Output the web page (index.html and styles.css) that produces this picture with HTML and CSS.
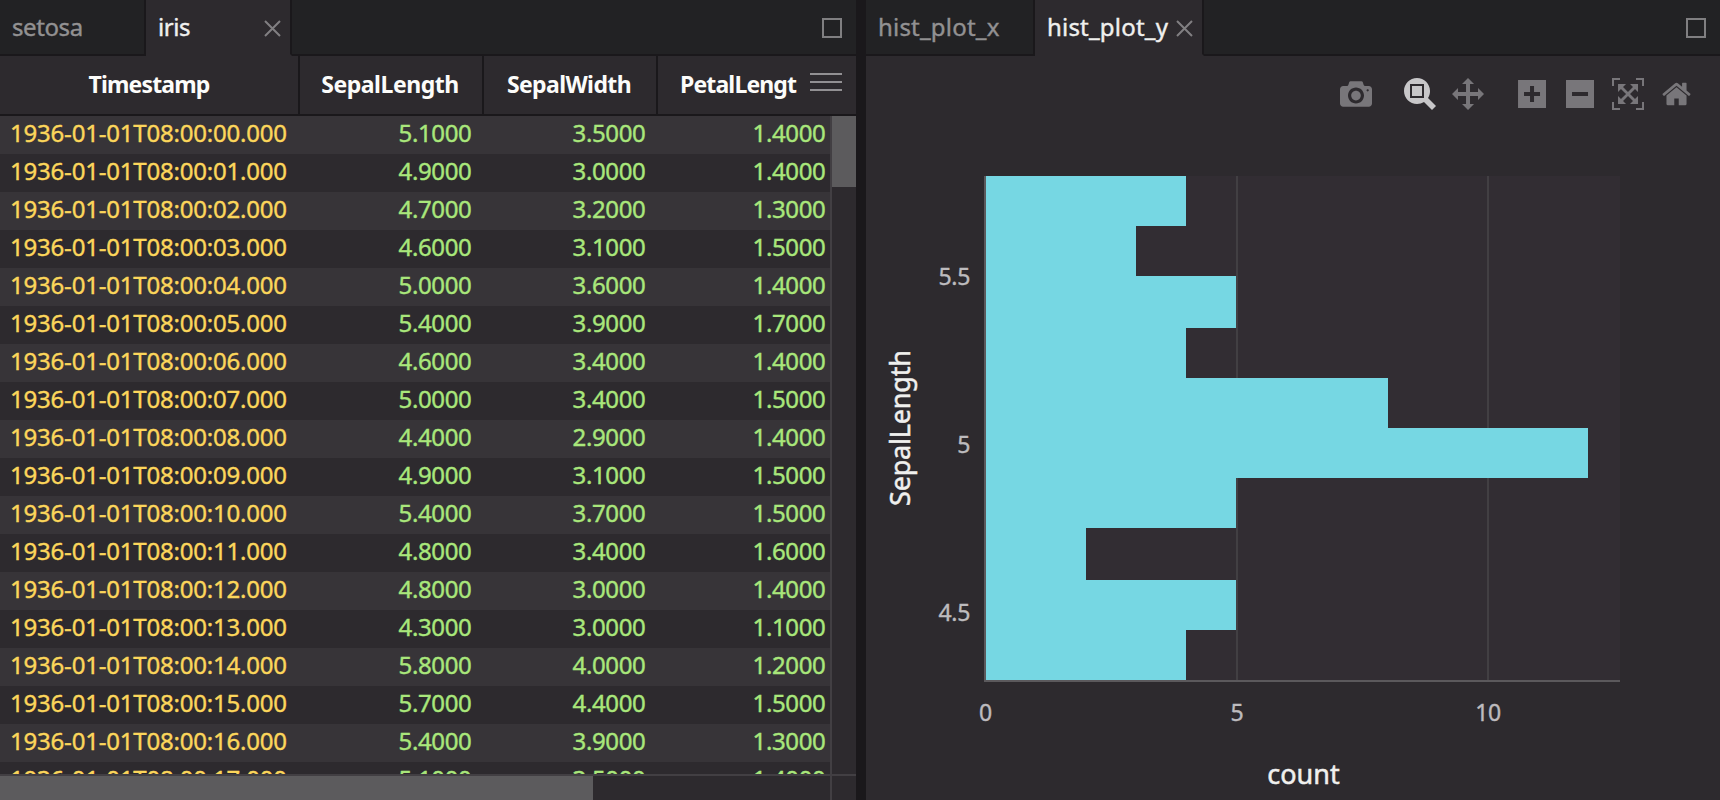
FILE: index.html
```html
<!DOCTYPE html>
<html lang="en">
<head>
<meta charset="utf-8">
<title>iris</title>
<link rel="stylesheet" href="styles.css">
</head>
<body>
<div class="workspace">
  <section class="panel panel-table">
    <nav class="tabs">
      <div class="tab tab-left t-setosa">setosa</div>
      <div class="tab tab-left active t-iris">iris
        <svg class="close" viewBox="0 0 17 17"><path d="M1 1L16 16M16 1L1 16"/></svg>
      </div>
      <div class="tab-fill"><span class="maximize"></span></div>
    </nav>
    <div class="grid-head">
      <div class="th">Timestamp</div>
      <div class="th th-length">SepalLength</div>
      <div class="th th-width">SepalWidth</div>
      <div class="th th-last"><span>PetalLengt</span><i class="menu"></i></div>
    </div>
    <div class="grid-main">
      <div class="rows">
        <div class="row"><span>1936-01-01T08:00:00.000</span><b>5.1000</b><b>3.5000</b><b>1.4000</b></div>
        <div class="row"><span>1936-01-01T08:00:01.000</span><b>4.9000</b><b>3.0000</b><b>1.4000</b></div>
        <div class="row"><span>1936-01-01T08:00:02.000</span><b>4.7000</b><b>3.2000</b><b>1.3000</b></div>
        <div class="row"><span>1936-01-01T08:00:03.000</span><b>4.6000</b><b>3.1000</b><b>1.5000</b></div>
        <div class="row"><span>1936-01-01T08:00:04.000</span><b>5.0000</b><b>3.6000</b><b>1.4000</b></div>
        <div class="row"><span>1936-01-01T08:00:05.000</span><b>5.4000</b><b>3.9000</b><b>1.7000</b></div>
        <div class="row"><span>1936-01-01T08:00:06.000</span><b>4.6000</b><b>3.4000</b><b>1.4000</b></div>
        <div class="row"><span>1936-01-01T08:00:07.000</span><b>5.0000</b><b>3.4000</b><b>1.5000</b></div>
        <div class="row"><span>1936-01-01T08:00:08.000</span><b>4.4000</b><b>2.9000</b><b>1.4000</b></div>
        <div class="row"><span>1936-01-01T08:00:09.000</span><b>4.9000</b><b>3.1000</b><b>1.5000</b></div>
        <div class="row"><span>1936-01-01T08:00:10.000</span><b>5.4000</b><b>3.7000</b><b>1.5000</b></div>
        <div class="row"><span>1936-01-01T08:00:11.000</span><b>4.8000</b><b>3.4000</b><b>1.6000</b></div>
        <div class="row"><span>1936-01-01T08:00:12.000</span><b>4.8000</b><b>3.0000</b><b>1.4000</b></div>
        <div class="row"><span>1936-01-01T08:00:13.000</span><b>4.3000</b><b>3.0000</b><b>1.1000</b></div>
        <div class="row"><span>1936-01-01T08:00:14.000</span><b>5.8000</b><b>4.0000</b><b>1.2000</b></div>
        <div class="row"><span>1936-01-01T08:00:15.000</span><b>5.7000</b><b>4.4000</b><b>1.5000</b></div>
        <div class="row"><span>1936-01-01T08:00:16.000</span><b>5.4000</b><b>3.9000</b><b>1.3000</b></div>
        <div class="row"><span>1936-01-01T08:00:17.000</span><b>5.1000</b><b>3.5000</b><b>1.4000</b></div>
      </div>
      <div class="vscroll"><div class="vthumb"></div></div>
      <div class="hscroll"><div class="hthumb"></div></div>
      <div class="corner"></div>
    </div>
  </section>

  <section class="panel panel-plot">
    <nav class="tabs">
      <div class="tab tab-right">hist_plot_x</div>
      <div class="tab tab-right active">hist_plot_y
        <svg class="close" viewBox="0 0 17 17"><path d="M1 1L16 16M16 1L1 16"/></svg>
      </div>
      <div class="tab-fill"><span class="maximize"></span></div>
    </nav>
    <div class="plot">
      <svg class="chart" viewBox="866 56 854 744">
        <rect class="plot-bg" x="984" y="176" width="636" height="504"/>
        <path class="gridline" d="M1237 176V680M1488 176V680"/>
        <path class="bars" d="M986 176H1186V226H1136V276H1236V328H1186V378H1388V428H1588V478H1236V528H1086V580H1236V630H1186V680H986Z"/>
        <path class="axis" d="M985 176V681H1620"/>
        <g class="tick" text-anchor="end">
          <text x="970" y="285">5.5</text>
          <text x="970" y="453">5</text>
          <text x="970" y="621">4.5</text>
        </g>
        <g class="tick" text-anchor="middle">
          <text x="985.5" y="721">0</text>
          <text x="1237" y="721">5</text>
          <text x="1488" y="721">10</text>
        </g>
        <text class="axis-title" text-anchor="middle" x="1303.5" y="784">count</text>
        <text class="axis-title" text-anchor="middle" transform="translate(909.5 428) rotate(-90)" textLength="156">SepalLength</text>
      </svg>
      <div class="modebar">
        <div class="group">
          <svg viewBox="0 0 1000 1000"><path transform="matrix(1 0 0 -1 0 850)" d="m500 450c-83 0-150-67-150-150 0-83 67-150 150-150 83 0 150 67 150 150 0 83-67 150-150 150z m400 150h-120c-16 0-34 13-39 29l-31 93c-6 15-23 28-40 28h-340c-16 0-34-13-39-28l-31-94c-6-15-23-28-40-28h-120c-55 0-100-45-100-100v-450c0-55 45-100 100-100h800c55 0 100 45 100 100v450c0 55-45 100-100 100z m-400-550c-138 0-250 112-250 250 0 138 112 250 250 250 138 0 250-112 250-250 0-138-112-250-250-250z m365 380c-19 0-35 16-35 35 0 19 16 35 35 35 19 0 35-16 35-35 0-19-16-35-35-35z"/></svg>
        </div>
        <div class="group">
          <svg class="on" viewBox="0 0 1000 1000"><path transform="matrix(1 0 0 -1 0 850)" d="m1000-25l-250 251c40 63 63 138 63 218 0 224-182 406-407 406-224 0-406-182-406-406s183-406 407-406c80 0 155 22 218 62l250-250 125 125z m-812 250l0 438 437 0 0-438-437 0z m62 375l313 0 0-312-313 0 0 312z"/></svg>
          <svg viewBox="0 0 1000 1000"><path transform="matrix(1 0 0 -1 0 850)" d="m1000 350l-187 188 0-125-250 0 0 250 125 0-188 187-187-187 125 0 0-250-250 0 0 125-188-188 186-187 0 125 252 0 0-250-125 0 187-188 188 188-125 0 0 250 250 0 0-126 187 188z"/></svg>
        </div>
        <div class="group">
          <svg viewBox="0 0 875 1000" class="w28"><path transform="matrix(1 0 0 -1 0 850)" d="m1 787l0-875 875 0 0 875-875 0z m687-500l-187 0 0-187-125 0 0 187-188 0 0 125 188 0 0 187 125 0 0-187 187 0 0-125z"/></svg>
          <svg viewBox="0 0 875 1000" class="w28 zoom-out"><path transform="matrix(1 0 0 -1 0 850)" d="m0 788l0-876 876 0 0 876-876 0z m688-500l-500 0 0 125 500 0 0-125z"/></svg>
          <svg viewBox="0 0 1000 1000"><path transform="matrix(1 0 0 -1 0 850)" d="m250 850l-187 0-63 0 0-62 0-188 63 0 0 188 187 0 0 62z m688 0l-188 0 0-62 188 0 0-188 62 0 0 188 0 62-62 0z m-875-938l0 188-63 0 0-188 0-62 63 0 187 0 0 62-187 0z m875 188l0-188-188 0 0-62 188 0 62 0 0 62 0 188-62 0z m-125 188l-1 0-93-94-156 156 156 156 92-93 2 0 0 250-250 0 0-2 93-92-156-156-156 156 94 92 0 2-250 0 0-250 0 0 93 93 157-156-157-156-93 94 0 0 0-250 250 0 0 0-94 93 156 157 156-157-93-93 0 0 250 0 0 250z"/></svg>
          <svg viewBox="0 0 928.6 1000" class="home"><path transform="matrix(1 0 0 -1 0 850)" d="m786 296v-267q0-15-11-26t-25-10h-214v214h-143v-214h-214q-15 0-25 10t-11 26v267q0 1 0 2t0 2l321 264 321-264q1-1 1-4z m124 39l-34-41q-5-5-12-6h-2q-7 0-12 3l-386 322-386-322q-7-4-13-4-7 2-12 7l-35 41q-4 5-3 13t6 12l401 334q18 15 42 15t43-15l136-114v109q0 8 5 13t13 5h107q8 0 13-5t5-13v-227l122-102q5-5 6-12t-4-13z"/></svg>
        </div>
      </div>
    </div>
  </section>
</div>
</body>
</html>
```
FILE: styles.css
```css
* { box-sizing: border-box; }

body {
  margin: 0;
  background: #1a181b;
  color: #f0f0ee;
  font: 24px "Noto Sans", sans-serif;
}

.workspace {
  display: grid;
  grid-template-columns: 856px 854px;
  column-gap: 10px;
  height: 800px;
  overflow: hidden;
}

.panel {
  display: flex;
  flex-direction: column;
  min-width: 0;
  height: 800px;
  background: #2d2a2e;
}

/* Tab strips */
.tabs { display: flex; flex: none; height: 56px; }

.tab {
  display: flex;
  align-items: center;
  justify-content: space-between;
  border-right: 2px solid #1a181b;
  border-bottom: 2px solid #1a181b;
  background: #222224;
  color: #929192;
  line-height: 54px;
  padding-left: 12px;
  white-space: nowrap;
  -webkit-text-stroke: 0.4px currentColor;
}
.tab-left { width: 146px; padding-right: 9px; letter-spacing: -0.4px; }
.tab-right { width: 169px; padding-right: 9px; letter-spacing: 0.2px; }
.tab.active { background: #2d2a2e; border-bottom-color: #2d2a2e; color: #f0f0ee; }

.close { width: 17px; height: 17px; margin-top: 2px; fill: none; stroke: #817f82; stroke-width: 2; }

.tab-fill {
  display: flex;
  flex: 1;
  align-items: center;
  justify-content: flex-end;
  padding: 2px 14px 0 0;
  border-bottom: 2px solid #1a181b;
  background: #222224;
}
.maximize { width: 20px; height: 20px; border: 2px solid #807f81; }

/* Data grid */
.grid-head {
  display: grid;
  flex: none;
  grid-template-columns: 300px 184px 174px 198px;
  height: 60px;
  border-bottom: 2px solid #1a181b;
}
.th {
  border-right: 2px solid #1a181b;
  color: #fcfcfa;
  font-size: 23px;
  font-weight: 700;
  letter-spacing: -0.85px;
  line-height: 57px;
  text-align: center;
}
.th-length { padding-right: 2px; letter-spacing: -0.45px; }
.th-width { padding-right: 2px; letter-spacing: -0.6px; }
.th-last {
  display: flex;
  justify-content: space-between;
  padding: 0 14px 0 22px;
  border-right: 0;
}
.menu {
  width: 32px;
  height: 18px;
  margin-top: 17px;
  border: solid #929093;
  border-width: 2px 0;
  background: linear-gradient(#929093, #929093) 0 6px / 100% 2px no-repeat;
}

.grid-main {
  display: grid;
  flex: 1;
  grid-template: 658px 26px / 830px 26px;
}
.rows { overflow: hidden; }
.row {
  display: grid;
  grid-template-columns: 300px 184px 174px 172px;
  height: 38px;
  line-height: 34px;
  letter-spacing: -0.2px;
  -webkit-text-stroke: 0.4px currentColor;
}
.row:nth-child(odd) { background: #373438; }
.row span { padding-left: 10px; color: #fcd65b; }
.row b { padding-right: 12.5px; color: #a9e77b; font-weight: 400; letter-spacing: -0.35px; text-align: right; }
.row b:last-child { padding-right: 4.5px; }

.vscroll { border-left: 2px solid #423f43; }
.vthumb { height: 71px; background: #5c5b5d; }
.hscroll { border-top: 2px solid #423f43; }
.hthumb { width: 593px; height: 24px; background: #5c5b5d; }
.corner { border-top: 2px solid #423f43; border-left: 2px solid #423f43; }

/* Plot */
.plot { position: relative; flex: 1; }
.chart { display: block; width: 854px; height: 744px; }
.plot-bg { fill: #322d33; }
.gridline { fill: none; stroke: #423f43; stroke-width: 2; }
.bars { fill: #76d7e3; }
.axis { fill: none; stroke: #5b595c; stroke-width: 2; }
.tick { fill: #bdbbbe; font-size: 23px; letter-spacing: -0.3px; stroke: #bdbbbe; stroke-width: 0.4px; }
.axis-title { fill: #f0f0ee; font-size: 27px; stroke: #f0f0ee; stroke-width: 0.5px; }

.modebar {
  position: absolute;
  top: 22px;
  right: 29px;
  display: flex;
  gap: 32px;
}
.group { display: flex; gap: 16px; }
.group:last-child { gap: 18px; margin-left: 2px; }
.modebar svg { display: block; width: 32px; height: 32px; fill: #78767a; }
.modebar svg.on { fill: #c8c7c9; }
.modebar svg.w28 { width: 28px; }
.modebar svg.zoom-out { margin-left: 2px; }
.modebar svg.home { width: 29px; }
```
